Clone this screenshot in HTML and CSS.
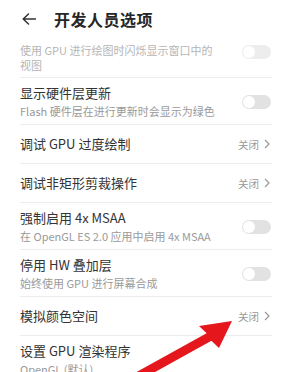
FILE: index.html
```html
<!DOCTYPE html>
<html lang="zh">
<head>
<meta charset="utf-8">
<title>开发人员选项</title>
<link rel="stylesheet" href="styles.css">
</head>
<body>
<div class="screen">
  <header class="header">
    <svg class="back" width="14" height="12" viewBox="0 0 14 12"><path d="M13.5 6H1.2M6.5 1L1.2 6l5.3 5" fill="none" stroke="#333" stroke-width="1.5" stroke-linecap="round" stroke-linejoin="round"/></svg>
    <h1 class="title">开发人员选项</h1>
  </header>
  <ul class="list">
    <li class="row row-partial">
      <div class="texts">
        <p class="sub faded loose">使用 GPU 进行绘图时闪烁显示窗口中的<br>视图</p>
      </div>
      <span class="toggle toggle-top faded-toggle"></span>
    </li>
    <li class="row row-double">
      <div class="texts">
        <p class="main">显示硬件层更新</p>
        <p class="sub">Flash 硬件层在进行更新时会显示为绿色</p>
      </div>
      <span class="toggle"></span>
    </li>
    <li class="row row-single">
      <div class="texts"><p class="main">调试 GPU 过度绘制</p></div>
      <span class="value">关闭<svg class="chev" width="6" height="10" viewBox="0 0 6 10"><path d="M1 1l4 4-4 4" fill="none" stroke="#999" stroke-width="1.2"/></svg></span>
    </li>
    <li class="row row-single">
      <div class="texts"><p class="main">调试非矩形剪裁操作</p></div>
      <span class="value">关闭<svg class="chev" width="6" height="10" viewBox="0 0 6 10"><path d="M1 1l4 4-4 4" fill="none" stroke="#999" stroke-width="1.2"/></svg></span>
    </li>
    <li class="row row-double">
      <div class="texts">
        <p class="main">强制启用 4x MSAA</p>
        <p class="sub">在 OpenGL ES 2.0 应用中启用 4x MSAA</p>
      </div>
      <span class="toggle"></span>
    </li>
    <li class="row row-double">
      <div class="texts">
        <p class="main">停用 HW 叠加层</p>
        <p class="sub">始终使用 GPU 进行屏幕合成</p>
      </div>
      <span class="toggle"></span>
    </li>
    <li class="row row-single">
      <div class="texts"><p class="main">模拟颜色空间</p></div>
      <span class="value">关闭<svg class="chev" width="6" height="10" viewBox="0 0 6 10"><path d="M1 1l4 4-4 4" fill="none" stroke="#999" stroke-width="1.2"/></svg></span>
    </li>
    <li class="row row-double">
      <div class="texts">
        <p class="main">设置 GPU 渲染程序</p>
        <p class="sub">OpenGL (默认)</p>
      </div>
    </li>
  </ul>
  <svg class="red-arrow" width="283" height="372" viewBox="0 0 283 372"><polygon points="132.6,374.2 206.6,333.2 199,326 232,321 219,348 211.4,340.8 137.4,381.8" fill="#e5161c"/></svg>
</div>
</body>
</html>
```
FILE: styles.css
```css
* { box-sizing: border-box; }
html, body { margin: 0; padding: 0; background: #fff; }
body {
  font-family: "Noto Sans CJK SC", "Noto Sans", sans-serif;
  color: #2b2b2b;
}
.screen {
  position: relative;
  width: 283px;
  height: 372px;
  overflow: hidden;
  background: #fff;
}
.header {
  height: 40px;
  display: flex;
  align-items: center;
  padding-left: 22px;
  gap: 18px;
  padding-bottom: 2px;
}
.back { display: block; }
.title {
  margin: 0;
  font-size: 16px;
  font-weight: 700;
  color: #262626;
  letter-spacing: 0.5px;
}
.list {
  list-style: none;
  margin: 0;
  padding: 0 11px 0 20px;
}
.row {
  display: flex;
  align-items: center;
  justify-content: space-between;
  border-bottom: 1px solid #ececec;
}
.row-partial { padding: 3px 0 4px; align-items: flex-start; }
.row-double { padding: 7px 0 6px; }
.row-single { height: 39px; }
.texts { display: flex; flex-direction: column; gap: 3px; }
p { margin: 0; }
.main {
  font-size: 13px;
  line-height: 16px;
  color: #333;
}
.sub {
  font-size: 11px;
  line-height: 14px;
  color: #9a9a9a;
}
.loose { line-height: 15px; }
.faded { color: #b5b5b5; }
.toggle {
  position: relative;
  width: 29px;
  height: 14px;
  border-radius: 7px;
  background: #e2e2e2;
  flex: none;
  margin-right: 1px;
}
.toggle::before {
  content: "";
  position: absolute;
  left: 1px;
  top: 1px;
  width: 12px;
  height: 12px;
  border-radius: 50%;
  background: #fff;
}
.toggle-top { margin-top: 2px; }
.faded-toggle { opacity: 0.6; }
.value {
  display: flex;
  align-items: center;
  gap: 5px;
  font-size: 10.5px;
  color: #9a9a9a;
  margin-right: 2px;
}
.chev { display: block; }
.red-arrow {
  position: absolute;
  left: 0;
  top: 0;
  pointer-events: none;
}
```
